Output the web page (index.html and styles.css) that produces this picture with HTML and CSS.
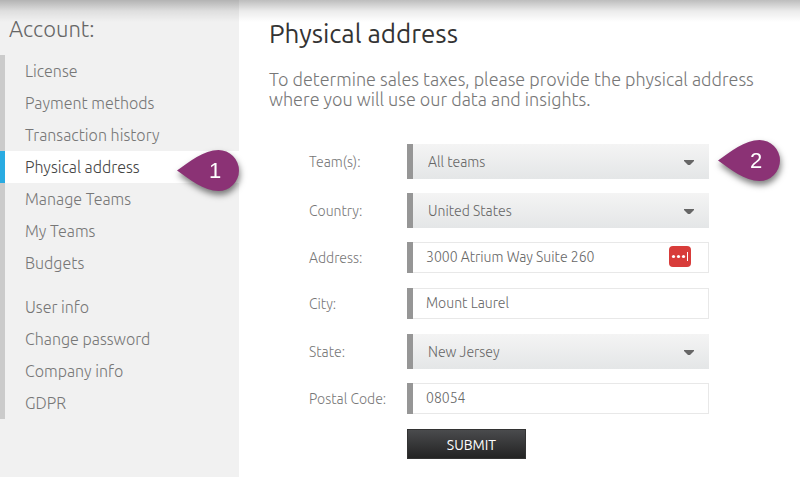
FILE: index.html
```html
<!DOCTYPE html>
<html lang="en">
<head>
  <meta charset="utf-8">
  <meta name="viewport" content="width=device-width, initial-scale=1.0">
  <title>Physical address</title>
  <link rel="stylesheet" href="styles.css">
</head>
<body>
  <div class="page">
    <aside class="sidebar">
      <h2>Account:</h2>
      <nav class="menu">
        <ul>
          <li><a href="#">License</a></li>
          <li><a href="#">Payment methods</a></li>
          <li><a href="#">Transaction history</a></li>
          <li class="active">
            <a href="#">Physical address</a>
            <svg class="pin" width="74" height="54" viewBox="0 0 74 54">
              <path d="M0 20.500C12 12 27 0 41.500 0a20.500 20.500 0 0 1 0 41C27 41 12 29 0 20.500z"/>
              <text x="38" y="28">1</text>
            </svg>
          </li>
          <li><a href="#">Manage Teams</a></li>
          <li><a href="#">My Teams</a></li>
          <li><a href="#">Budgets</a></li>
        </ul>
        <ul>
          <li><a href="#">User info</a></li>
          <li><a href="#">Change password</a></li>
          <li><a href="#">Company info</a></li>
          <li><a href="#">GDPR</a></li>
        </ul>
      </nav>
    </aside>

    <main class="content">
      <h1>Physical address</h1>
      <p class="intro">To determine sales taxes, please provide the physical address where you will use our data and insights.</p>

      <form class="address-form">
        <div class="row">
          <label for="team">Team(s):</label>
          <div class="field">
            <select id="team"><option>All teams</option></select>
            <svg class="arrow" width="10" height="5"><path d="M0 0h10v1L6 5H4L0 1z"/></svg>
            <svg class="pin" width="74" height="54" viewBox="0 0 74 54">
              <path d="M0 20.500C12 12 27 0 41.500 0a20.500 20.500 0 0 1 0 41C27 41 12 29 0 20.500z"/>
              <text x="38" y="28">2</text>
            </svg>
          </div>
        </div>
        <div class="row">
          <label for="country">Country:</label>
          <div class="field">
            <select id="country"><option>United States</option></select>
            <svg class="arrow" width="10" height="5"><path d="M0 0h10v1L6 5H4L0 1z"/></svg>
          </div>
        </div>
        <div class="row text-row">
          <label for="address">Address:</label>
          <div class="field">
            <input type="text" id="address" value="3000 Atrium Way Suite 260">
            <svg class="fill-icon" width="22" height="21" viewBox="0 0 22 21">
              <rect width="22" height="21" rx="4" fill="#d83c3a"/>
              <g fill="#fff">
                <circle cx="4.500" cy="10.500" r="1.600"/>
                <circle cx="9.500" cy="10.500" r="1.600"/>
                <circle cx="14.500" cy="10.500" r="1.600"/>
                <rect x="18" y="6" width="1" height="9"/>
              </g>
            </svg>
          </div>
        </div>
        <div class="row text-row">
          <label for="city">City:</label>
          <div class="field"><input type="text" id="city" value="Mount Laurel"></div>
        </div>
        <div class="row">
          <label for="state">State:</label>
          <div class="field">
            <select id="state"><option>New Jersey</option></select>
            <svg class="arrow" width="10" height="5"><path d="M0 0h10v1L6 5H4L0 1z"/></svg>
          </div>
        </div>
        <div class="row text-row">
          <label for="postal">Postal Code:</label>
          <div class="field"><input type="text" id="postal" value="08054"></div>
        </div>
        <div class="row">
          <button type="submit">SUBMIT</button>
        </div>
      </form>
    </main>
  </div>
</body>
</html>
```
FILE: styles.css
```css
* {
  box-sizing: border-box;
}
body {
  margin: 0;
  background: #fff;
  color: #777;
  font-family: Ubuntu, "Noto Sans", sans-serif;
  font-weight: 300;
}
.page {
  display: grid;
  grid-template-columns: 239px 1fr;
  min-height: 100vh;
}
/* shadow under the site header */
.page::before {
  content: "";
  position: absolute;
  top: 0;
  left: 0;
  width: 100%;
  height: 22px;
  background: linear-gradient(rgba(0,0,0,0.26), rgba(0,0,0,0.08) 50%, rgba(0,0,0,0));
}
.sidebar {
  background: #f1f1f1;
}
.sidebar h2 {
  margin: 0;
  padding: 14px 9px 11px;
  font-size: 22px;
  line-height: 30px;
  font-weight: 300;
  color: #666;
}
.menu {
  display: flex;
  flex-direction: column;
  gap: 12px;
  background: linear-gradient(to right, #cbcbcb 5px, transparent 5px);
}
.menu ul {
  list-style: none;
  margin: 0;
  padding: 0;
}
.menu li {
  position: relative;
}
.menu a {
  display: block;
  padding-left: 25px;
  font-size: 16px;
  line-height: 32px;
  color: #777;
  text-decoration: none;
}
.menu .active a {
  background: #fff;
  border-left: 5px solid #29abe2;
  padding-left: 20px;
  color: #444;
}
.pin {
  position: absolute;
  overflow: visible;
  fill: #8b3275;
  filter: drop-shadow(1px 4px 3px rgba(0,0,0,0.5));
}
.pin text {
  fill: #fff;
  font-family: "Liberation Sans", Arial, sans-serif;
  font-size: 22px;
  font-weight: 400;
  text-anchor: middle;
}
.menu .pin {
  top: -1px;
  left: 177px;
}
.content {
  padding: 17px 30px;
}
h1 {
  margin: 0 0 18px;
  font-size: 26px;
  line-height: 34px;
  font-weight: 400;
  color: #333;
}
.intro {
  margin: 0;
  max-width: 500px;
  font-size: 18px;
  line-height: 20px;
}
.address-form {
  display: flex;
  flex-direction: column;
  gap: 14px;
  margin-top: 35px;
  padding-left: 40px;
}
.row {
  display: flex;
  align-items: center;
}
.text-row {
  padding-bottom: 1px;
}
.row label {
  width: 98px;
  font-size: 14px;
}
.field {
  position: relative;
  flex: 0 1 302px;
  border-left: 6px solid #969696;
}
.field select,
.field input {
  display: block;
  width: 100%;
  border: 1px solid #e8e8e8;
  border-left: 0;
  border-radius: 0;
  font: inherit;
  font-size: 14px;
  color: #666;
}
.field select {
  appearance: none;
  height: 35px;
  padding: 0 30px 0 15px;
  border: 0;
  background: linear-gradient(#f4f4f4, #e4e6e7);
}
.field input {
  height: 31px;
  padding: 0 50px 2px 13px;
  background: #fff;
}
.arrow {
  position: absolute;
  top: 16px;
  right: 15px;
  fill: #666;
  pointer-events: none;
}
.fill-icon {
  position: absolute;
  top: 4px;
  right: 18px;
}
.field .pin {
  top: -4px;
  left: 305px;
}
button {
  width: 119px;
  height: 30px;
  margin-left: 98px;
  padding: 2px 0 0 10px;
  border: 1px solid #333;
  background: linear-gradient(#4a4b4d, #232323);
  color: #fff;
  font: inherit;
  font-size: 14px;
  font-weight: 400;
}
```
